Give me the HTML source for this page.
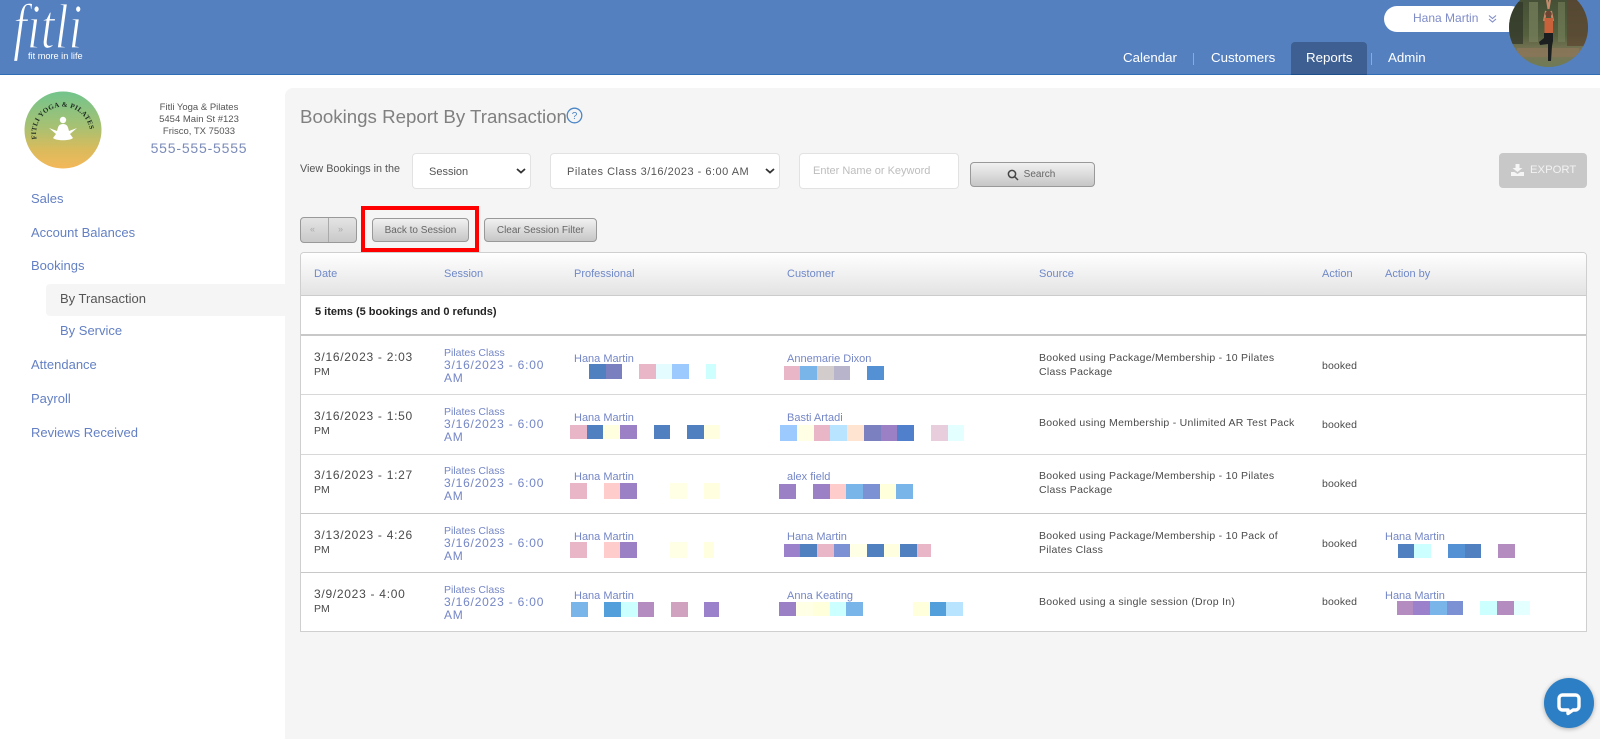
<!DOCTYPE html>
<html lang="en">
<head>
<meta charset="utf-8">
<title>Bookings Report By Transaction</title>
<style>
html,body{margin:0;padding:0;width:1600px;height:739px;overflow:hidden;background:#fff}
body{position:relative;font-family:"Liberation Sans",sans-serif;color:#4a4a4a}
.a{position:absolute;white-space:nowrap}
.hd{left:0;top:0;width:1600px;height:74px;background:#5480c0;border-bottom:1px solid #2f6db5}
.nav{font-size:13.3px;color:#fff;line-height:16px;top:50px}
.sep{position:absolute;top:53px;width:1px;height:12px;background:#8eaad6}
.side{font-size:13px;line-height:16px;color:#6480c4;left:31px}
.main{left:285px;top:88px;width:1315px;height:651px;background:#f5f5f5;border-top-left-radius:8px}
.sel{background:#fff;border:1px solid #e2e2e2;border-radius:4px;box-sizing:border-box;font-size:11px;color:#555;line-height:36px}
.btn{box-sizing:border-box;border:1px solid #999;border-radius:4px;background:linear-gradient(#f1f1f1,#c6c6c6);font-size:10px;color:#666;text-align:center}
.th{font-size:11px;line-height:14px;color:#6f88c8;top:267px}
.t{font-size:10.5px;line-height:13.5px;color:#4a4a4a;letter-spacing:.27px}
.d{font-size:10.5px;line-height:13.5px;color:#4a4a4a}
.d b{font-weight:normal;font-size:12px;letter-spacing:.72px}
.b{font-size:10.5px;line-height:13px;color:#4a4a4a;left:1322px;letter-spacing:.1px}
.l{font-size:11px;line-height:13px;color:#7486c6}
.s{font-size:10.5px;line-height:12px;color:#7486c6;left:444px}
.s span{display:block;font-size:12px;line-height:13px;letter-spacing:.8px}
.ln{position:absolute;left:301px;width:1285px;height:1px;background:#c8c8c8}
</style>
</head>
<body>
<div class="a hd"></div>
<div class="a" style="left:13px;top:-5px;font-family:'Liberation Serif',serif;font-style:italic;font-size:64px;line-height:64px;color:#fff;transform-origin:left top;transform:scaleX(.78);-webkit-text-stroke:1.300px #5480c0">fitli</div>
<div class="a" style="left:28px;top:51px;font-size:9.200px;line-height:11px;color:#fff">fit more in life</div>

<div class="a" style="left:1384px;top:6px;width:140px;height:26px;background:#fff;border-radius:13px"></div>
<div class="a" style="left:1413px;top:11px;font-size:12px;line-height:15px;color:#7f8cc8">Hana Martin</div>
<svg class="a" style="left:1488px;top:14px" width="9" height="10" viewBox="0 0 9 10" fill="none" stroke="#7f8cc8" stroke-width="1.1"><path d="M1 1.500l3.500 3 3.500-3M1 5l3.500 3 3.500-3"/></svg>
<svg class="a" style="left:1509px;top:-12px" width="79" height="79" viewBox="0 0 79 79">
<defs><clipPath id="av"><circle cx="39.500" cy="39.500" r="39.500"/></clipPath>
<linearGradient id="ag" x1="0" y1="0" x2="0" y2="1"><stop offset="0" stop-color="#3f4a32"/><stop offset=".6" stop-color="#55603f"/><stop offset=".8" stop-color="#7a7656"/><stop offset="1" stop-color="#6f7a55"/></linearGradient></defs>
<g clip-path="url(#av)"><rect width="79" height="79" fill="url(#ag)"/>
<rect x="0" y="14" width="14" height="42" fill="#2f3528" opacity=".7"/><rect x="58" y="12" width="21" height="46" fill="#5d4430" opacity=".7"/><rect x="20" y="14" width="9" height="40" fill="#77805c" opacity=".7"/><rect x="49" y="14" width="7" height="40" fill="#77805c" opacity=".6"/>
<rect x="8" y="60" width="62" height="9" fill="#8b7558" opacity=".8"/>
<path d="M38 12l1.500 9M41 12l-1.500 9" stroke="#c98a6c" stroke-width="2" fill="none"/><path d="M35 33l2-10M44 33l-2-10" stroke="#c98a6c" stroke-width="2" fill="none"/><circle cx="39.500" cy="26" r="3.200" fill="#6e4532"/>
<rect x="35.500" y="30" width="8.500" height="15" fill="#c9623a"/><path d="M35 45h9l0 8-1 5-1 15h-3l0-17-8 1-1-3 5-4z" fill="#1b1f1f"/></g></svg>

<div class="a nav" style="left:1123px">Calendar</div>
<div class="sep" style="left:1193px"></div>
<div class="a nav" style="left:1211px">Customers</div>
<div class="a" style="left:1291px;top:42px;width:76px;height:32px;background:#3e5f91;border-radius:4px 4px 0 0;border-bottom:1px solid #1d4f8a"></div>
<div class="a nav" style="left:1306px">Reports</div>
<div class="sep" style="left:1371px"></div>
<div class="a nav" style="left:1388px">Admin</div>

<svg class="a" style="left:24px;top:91px" width="78" height="78" viewBox="0 0 78 78">
<defs><linearGradient id="lg" x1="0" y1="0" x2="0" y2="1"><stop offset="0" stop-color="#72c48d"/><stop offset=".45" stop-color="#a6c173"/><stop offset=".75" stop-color="#d9bb5c"/><stop offset="1" stop-color="#f4b85a"/></linearGradient>
<path id="arc" d="M13 50A27 27 0 1 1 65 50"/></defs>
<circle cx="39" cy="39" r="38.500" fill="url(#lg)"/>
<text font-family="'Liberation Serif',serif" font-size="7" font-weight="bold" fill="#1d2a1f" letter-spacing=".3"><textPath href="#arc" startOffset="2%">FITLI YOGA &amp; PILATES</textPath></text>
<circle cx="39" cy="29" r="3.200" fill="#fff"/><path d="M39 33c5 0 5 4 6 7l8-3-7 6 3 4c-3 3-17 3-20 0l3-4-7-6 8 3c1-3 1-7 6-7z" fill="#fff"/></svg>
<div class="a" style="left:99px;width:200px;top:102px;text-align:center;font-size:9.500px;line-height:12px;color:#555">Fitli Yoga &amp; Pilates<br>5454 Main St #123<br>Frisco, TX 75033</div>
<div class="a" style="left:99px;width:200px;top:139px;text-align:center;font-size:14px;line-height:18px;color:#7b8bb8;letter-spacing:.8px">555-555-5555</div>

<div class="a side" style="top:191px">Sales</div>
<div class="a side" style="top:225px">Account Balances</div>
<div class="a side" style="top:258px">Bookings</div>
<div class="a" style="left:46px;top:284px;width:239px;height:32px;background:#f5f5f5;border-radius:4px 0 0 4px"></div>
<div class="a side" style="top:291px;left:60px;color:#555">By Transaction</div>
<div class="a side" style="top:323px;left:60px">By Service</div>
<div class="a side" style="top:357px">Attendance</div>
<div class="a side" style="top:391px">Payroll</div>
<div class="a side" style="top:425px">Reviews Received</div>

<div class="a main"></div>
<div class="a" style="left:300px;top:105px;font-size:18.700px;line-height:24px;color:#808080">Bookings Report By Transaction</div>
<svg class="a" style="left:566px;top:107px" width="17" height="17" viewBox="0 0 17 17"><circle cx="8.500" cy="8.500" r="7.300" fill="none" stroke="#4a86c6" stroke-width="1.300"/><text x="8.500" y="12" text-anchor="middle" font-family="'Liberation Sans',sans-serif" font-size="10" fill="#4a86c6">?</text></svg>

<div class="a" style="left:300px;top:162px;font-size:10.800px;line-height:14px;color:#555">View Bookings in the</div>
<div class="a sel" style="left:412px;top:153px;width:119px;height:36px;padding-left:16px">Session</div>
<svg class="a" style="left:516px;top:168px" width="10" height="6" viewBox="0 0 10 6" fill="none" stroke="#333" stroke-width="1.800"><path d="M1 1l4 3.500L9 1"/></svg>
<div class="a sel" style="left:550px;top:153px;width:230px;height:36px;padding-left:16px;letter-spacing:.5px">Pilates Class 3/16/2023 - 6:00 AM</div>
<svg class="a" style="left:765px;top:168px" width="10" height="6" viewBox="0 0 10 6" fill="none" stroke="#333" stroke-width="1.800"><path d="M1 1l4 3.500L9 1"/></svg>
<div class="a sel" style="left:799px;top:153px;width:160px;height:36px;padding-left:13px;color:#bdbdbd;line-height:34px">Enter Name or Keyword</div>
<div class="a btn" style="left:970px;top:162px;width:125px;height:25px;line-height:24px;padding-left:14px">Search</div>
<svg class="a" style="left:1007px;top:169px" width="12" height="12" viewBox="0 0 12 12" fill="none" stroke="#444" stroke-width="1.500"><circle cx="5" cy="5" r="3.600"/><path d="M7.700 7.700L11 11"/></svg>

<div class="a" style="left:1499px;top:153px;width:88px;height:35px;background:#c8c8c8;border-radius:4px"></div>
<svg class="a" style="left:1511px;top:164px" width="13" height="12" viewBox="0 0 13 12" fill="#f5f5f5"><path d="M4.500 0h4v4h3L6.500 8 1.500 4h3z"/><path d="M0 8h3.500l3 2 3-2H13v4H0z"/></svg>
<div class="a" style="left:1530px;top:162px;font-size:11.300px;line-height:16px;color:#f2f2f2">EXPORT</div>

<div class="a" style="left:300px;top:217px;width:57px;height:26px;box-sizing:border-box;border:1px solid #999;border-radius:4px;background:linear-gradient(#e4e4e4,#c9c9c9)"></div>
<div class="a" style="left:328px;top:218px;width:1px;height:24px;background:#aaa"></div>
<div class="a" style="left:310px;top:223px;font-size:9px;line-height:13px;color:#aaa">«</div>
<div class="a" style="left:338px;top:223px;font-size:9px;line-height:13px;color:#aaa">»</div>
<div class="a btn" style="left:372px;top:218px;width:97px;height:24px;line-height:23px">Back to Session</div>
<div class="a" style="left:361px;top:206px;width:118px;height:46px;box-sizing:border-box;border:4px solid #f00"></div>
<div class="a btn" style="left:484px;top:218px;width:113px;height:24px;line-height:23px">Clear Session Filter</div>

<div class="a" style="left:300px;top:252px;width:1287px;height:380px;box-sizing:border-box;background:#fff;border:1px solid #cfcfcf;border-radius:4px 4px 0 0"></div>
<div class="a" style="left:301px;top:253px;width:1285px;height:42px;background:linear-gradient(#fff,#e3e3e3);border-bottom:1px solid #ccc;border-radius:3px 3px 0 0"></div>
<div class="a th" style="left:314px">Date</div>
<div class="a th" style="left:444px">Session</div>
<div class="a th" style="left:574px">Professional</div>
<div class="a th" style="left:787px">Customer</div>
<div class="a th" style="left:1039px">Source</div>
<div class="a th" style="left:1322px">Action</div>
<div class="a th" style="left:1385px">Action by</div>
<div class="a" style="left:315px;top:305px;font-size:11px;line-height:14px;font-weight:bold;color:#222">5 items (5 bookings and 0 refunds)</div>
<div class="ln" style="top:334px;height:2px"></div>
<div class="ln" style="top:394px;background:#d8d8d8"></div>
<div class="ln" style="top:454px;background:#d8d8d8"></div>
<div class="ln" style="top:513px"></div>
<div class="ln" style="top:572px"></div>

<div class="a d" style="left:314px;top:351px"><b>3/16/2023 - 2:03</b><br>PM</div>
<div class="a s" style="top:347px">Pilates Class<span>3/16/2023 - 6:00<br>AM</span></div>
<div class="a l" style="left:574px;top:353px">Hana Martin</div>
<div class="a l" style="left:787px;top:353px">Annemarie Dixon</div>
<div class="a t" style="left:1039px;top:352px">Booked using Package/Membership - 10 Pilates<br>Class Package</div>
<div class="a b" style="top:360px">booked</div>

<div class="a d" style="left:314px;top:410px"><b>3/16/2023 - 1:50</b><br>PM</div>
<div class="a s" style="top:406px">Pilates Class<span>3/16/2023 - 6:00<br>AM</span></div>
<div class="a l" style="left:574px;top:412px">Hana Martin</div>
<div class="a l" style="left:787px;top:412px">Basti Artadi</div>
<div class="a t" style="left:1039px;top:417px">Booked using Membership - Unlimited AR Test Pack</div>
<div class="a b" style="top:419px">booked</div>

<div class="a d" style="left:314px;top:469px"><b>3/16/2023 - 1:27</b><br>PM</div>
<div class="a s" style="top:465px">Pilates Class<span>3/16/2023 - 6:00<br>AM</span></div>
<div class="a l" style="left:574px;top:471px">Hana Martin</div>
<div class="a l" style="left:787px;top:471px">alex field</div>
<div class="a t" style="left:1039px;top:470px">Booked using Package/Membership - 10 Pilates<br>Class Package</div>
<div class="a b" style="top:478px">booked</div>

<div class="a d" style="left:314px;top:529px"><b>3/13/2023 - 4:26</b><br>PM</div>
<div class="a s" style="top:525px">Pilates Class<span>3/16/2023 - 6:00<br>AM</span></div>
<div class="a l" style="left:574px;top:531px">Hana Martin</div>
<div class="a l" style="left:787px;top:531px">Hana Martin</div>
<div class="a t" style="left:1039px;top:530px">Booked using Package/Membership - 10 Pack of<br>Pilates Class</div>
<div class="a b" style="top:538px">booked</div>
<div class="a l" style="left:1385px;top:531px">Hana Martin</div>

<div class="a d" style="left:314px;top:588px"><b>3/9/2023 - 4:00</b><br>PM</div>
<div class="a s" style="top:584px">Pilates Class<span>3/16/2023 - 6:00<br>AM</span></div>
<div class="a l" style="left:574px;top:590px">Hana Martin</div>
<div class="a l" style="left:787px;top:590px">Anna Keating</div>
<div class="a t" style="left:1039px;top:596px">Booked using a single session (Drop In)</div>
<div class="a b" style="top:596px">booked</div>
<div class="a l" style="left:1385px;top:590px">Hana Martin</div>

<svg class="a" style="left:0;top:0" width="1600" height="739" viewBox="0 0 1600 739">
<g transform="translate(0 364)" >
<rect x="589" width="17" height="15" fill="#5080c0"/><rect x="606" width="16" height="15" fill="#7a7fc0"/><rect x="639" width="17" height="15" fill="#e8b6c6"/><rect x="656" width="16" height="15" fill="#e4fbff"/><rect x="672" width="17" height="15" fill="#9ccaff"/><rect x="706" width="10" height="15" fill="#cdffff"/>
<rect x="784" y="2" width="16" height="14" fill="#e8b6c6"/><rect x="800" y="2" width="17" height="14" fill="#7ab5ea"/><rect x="817" y="2" width="17" height="14" fill="#d2cccc"/><rect x="834" y="2" width="16" height="14" fill="#b8b4cc"/><rect x="867" y="2" width="17" height="14" fill="#5490d4"/>
</g>
<g transform="translate(0 425)">
<rect x="570" width="17" height="14" fill="#e8b6c6"/><rect x="587" width="16" height="14" fill="#5080c0"/><rect x="603" width="17" height="14" fill="#ffffe0"/><rect x="620" width="17" height="14" fill="#9b80c6"/><rect x="654" width="16" height="14" fill="#5080c0"/><rect x="687" width="17" height="14" fill="#5080c0"/><rect x="704" width="16" height="14" fill="#ffffe0"/>
<rect x="780" width="17" height="16" fill="#9ccaff"/><rect x="797" width="17" height="16" fill="#ffffe6"/><rect x="814" width="16" height="16" fill="#e8b6c6"/><rect x="830" width="17" height="16" fill="#b8e4ff"/><rect x="847" width="17" height="16" fill="#ffe4d2"/><rect x="864" width="17" height="16" fill="#7a80c0"/><rect x="881" width="16" height="16" fill="#9b80c6"/><rect x="897" width="17" height="16" fill="#5080cc"/><rect x="931" width="17" height="16" fill="#e8cedc"/><rect x="948" width="16" height="16" fill="#e4ffff"/>
</g>
<g transform="translate(0 483)">
<rect x="570" width="17" height="16" fill="#e8b6c6"/><rect x="604" width="16" height="16" fill="#ffcccc"/><rect x="620" width="17" height="16" fill="#9b80c6"/><rect x="670" width="17" height="16" fill="#ffffe6"/><rect x="704" width="16" height="16" fill="#ffffe0"/>
<rect x="779" y="1" width="17" height="15" fill="#9b80c6"/><rect x="813" y="1" width="17" height="15" fill="#9b80c6"/><rect x="830" y="1" width="16" height="15" fill="#ffcccc"/><rect x="846" y="1" width="17" height="15" fill="#7ab5ea"/><rect x="863" y="1" width="17" height="15" fill="#7c90d4"/><rect x="880" y="1" width="16" height="15" fill="#ffffdc"/><rect x="896" y="1" width="17" height="15" fill="#7ab5ea"/>
</g>
<g transform="translate(0 542)">
<rect x="570" width="17" height="16" fill="#e8b6c6"/><rect x="604" width="16" height="16" fill="#ffcccc"/><rect x="620" width="17" height="16" fill="#9b80c6"/><rect x="670" width="17" height="16" fill="#ffffe6"/><rect x="704" width="10" height="16" fill="#ffffe0"/>
<rect x="784" y="2" width="16" height="13" fill="#9b80cc"/><rect x="800" y="2" width="17" height="13" fill="#5080c0"/><rect x="817" y="2" width="17" height="13" fill="#e8b6c6"/><rect x="834" y="2" width="16" height="13" fill="#7c90d4"/><rect x="850" y="2" width="17" height="13" fill="#ffffe6"/><rect x="867" y="2" width="17" height="13" fill="#5080c0"/><rect x="884" y="2" width="16" height="13" fill="#ffffe0"/><rect x="900" y="2" width="17" height="13" fill="#5080c0"/><rect x="917" y="2" width="14" height="13" fill="#e8b6c6"/>
<rect x="1398" y="2" width="16" height="14" fill="#5080c0"/><rect x="1414" y="2" width="17" height="14" fill="#ccffff"/><rect x="1448" y="2" width="17" height="14" fill="#5490d4"/><rect x="1465" y="2" width="16" height="14" fill="#5080c0"/><rect x="1498" y="2" width="17" height="14" fill="#b48cc0"/>
</g>
<g transform="translate(0 602)">
<rect x="571" width="17" height="15" fill="#7ab5ea"/><rect x="604" width="17" height="15" fill="#529fdc"/><rect x="621" width="17" height="15" fill="#ccffff"/><rect x="638" width="16" height="15" fill="#b48cc0"/><rect x="671" width="17" height="15" fill="#d0a2c0"/><rect x="704" width="15" height="15" fill="#9b80cc"/>
<rect x="779" width="17" height="14" fill="#9b80c6"/><rect x="796" width="17" height="14" fill="#ffffe6"/><rect x="813" width="17" height="14" fill="#ffffdc"/><rect x="830" width="16" height="14" fill="#ccffff"/><rect x="846" width="17" height="14" fill="#7ab5ea"/><rect x="913" width="17" height="14" fill="#ffffdc"/><rect x="930" width="16" height="14" fill="#529fdc"/><rect x="946" width="17" height="14" fill="#b8e4ff"/>
<rect x="1397" y="-1" width="16" height="14" fill="#b48cc0"/><rect x="1413" y="-1" width="17" height="14" fill="#9b80cc"/><rect x="1430" y="-1" width="17" height="14" fill="#7ab5ea"/><rect x="1447" y="-1" width="16" height="14" fill="#7c90d4"/><rect x="1480" y="-1" width="17" height="14" fill="#ccffff"/><rect x="1497" y="-1" width="17" height="14" fill="#b48cc0"/><rect x="1514" y="-1" width="16" height="14" fill="#e4ffff"/>
</g>
</svg>

<div class="a" style="left:1544px;top:678px;width:50px;height:50px;border-radius:50%;background:#2c7fc4;box-shadow:0 1px 5px rgba(0,0,0,.3)"></div>
<svg class="a" style="left:1557px;top:693px" width="24" height="23" viewBox="0 0 24 23" fill="none" stroke="#fff" stroke-width="3.400" stroke-linejoin="round"><path d="M5.500 2h13A3.500 3.500 0 0 1 22 5.500v8a3.500 3.500 0 0 1-3.500 3.500H16l-5 3.500V17H5.500A3.500 3.500 0 0 1 2 13.500v-8A3.500 3.500 0 0 1 5.500 2z"/></svg>
</body>
</html>
